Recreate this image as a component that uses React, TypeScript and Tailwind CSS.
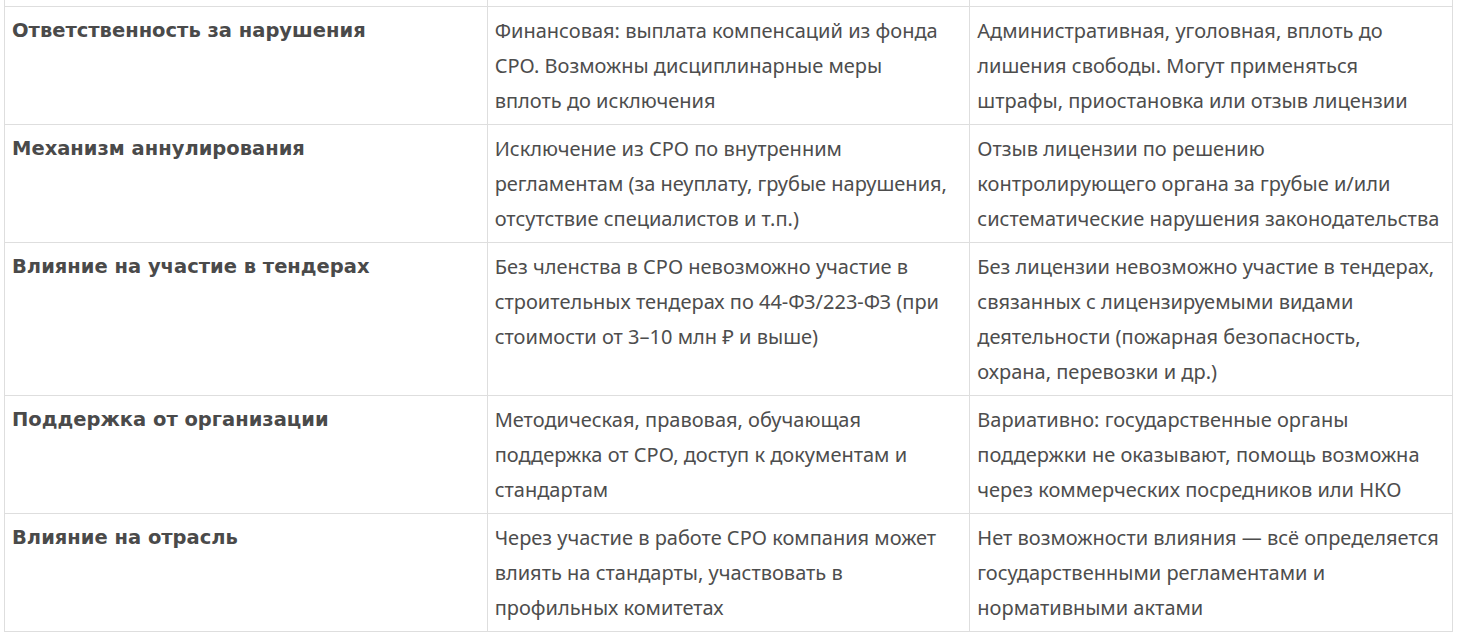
import React from 'react';

const rows = [
  {
    title: 'Ответственность за нарушения',
    sro: ['Финансовая: выплата компенсаций из фонда', 'СРО. Возможны дисциплинарные меры', 'вплоть до исключения'],
    license: ['Административная, уголовная, вплоть до', 'лишения свободы. Могут применяться', 'штрафы, приостановка или отзыв лицензии'],
  },
  {
    title: 'Механизм аннулирования',
    sro: ['Исключение из СРО по внутренним', 'регламентам (за неуплату, грубые нарушения,', 'отсутствие специалистов и т.п.)'],
    license: ['Отзыв лицензии по решению', 'контролирующего органа за грубые и/или', 'систематические нарушения законодательства'],
  },
  {
    title: 'Влияние на участие в тендерах',
    sro: ['Без членства в СРО невозможно участие в', 'строительных тендерах по 44-ФЗ/223-ФЗ (при', 'стоимости от 3–10 млн ₽ и выше)'],
    license: [
      'Без лицензии невозможно участие в тендерах,',
      'связанных с лицензируемыми видами',
      'деятельности (пожарная безопасность,',
      'охрана, перевозки и др.)',
    ],
  },
  {
    title: 'Поддержка от организации',
    sro: ['Методическая, правовая, обучающая', 'поддержка от СРО, доступ к документам и', 'стандартам'],
    license: ['Вариативно: государственные органы', 'поддержки не оказывают, помощь возможна', 'через коммерческих посредников или НКО'],
  },
  {
    title: 'Влияние на отрасль',
    sro: ['Через участие в работе СРО компания может', 'влиять на стандарты, участвовать в', 'профильных комитетах'],
    license: ['Нет возможности влияния — всё определяется', 'государственными регламентами и', 'нормативными актами'],
  },
];

const cell = 'border border-[#dedede] align-top px-[7px] py-[6px]';

function Lines({ lines }: { lines: string[] }) {
  return (
    <>
      {lines.map((l) => (
        <span key={l} className="block whitespace-nowrap">
          {l}
        </span>
      ))}
    </>
  );
}

export default function App() {
  return (
    <div className="min-h-screen bg-white pl-[4px] pr-[5px]">
      <table className="w-full table-fixed border-collapse text-[#4d4d4d]">
        <tbody>
          <tr>
            <td className="border-x border-b border-[#dedede] h-[6px] p-0"></td>
            <td className="border-x border-b border-[#dedede] h-[6px] p-0"></td>
            <td className="border-x border-b border-[#dedede] h-[6px] p-0"></td>
          </tr>
          {rows.map((r) => (
            <tr key={r.title}>
              <td className={`${cell} font-['DejaVu_Sans',sans-serif] font-bold text-[19.5px] leading-[35px] text-[#4a4a4a]`}>
                {r.title}
              </td>
              <td className={`${cell} font-['Noto_Sans',sans-serif] text-[20px] leading-[35px]`}>
                <Lines lines={r.sro} />
              </td>
              <td className={`${cell} font-['Noto_Sans',sans-serif] text-[20px] leading-[35px]`}>
                <Lines lines={r.license} />
              </td>
            </tr>
          ))}
        </tbody>
      </table>
    </div>
  );
}
